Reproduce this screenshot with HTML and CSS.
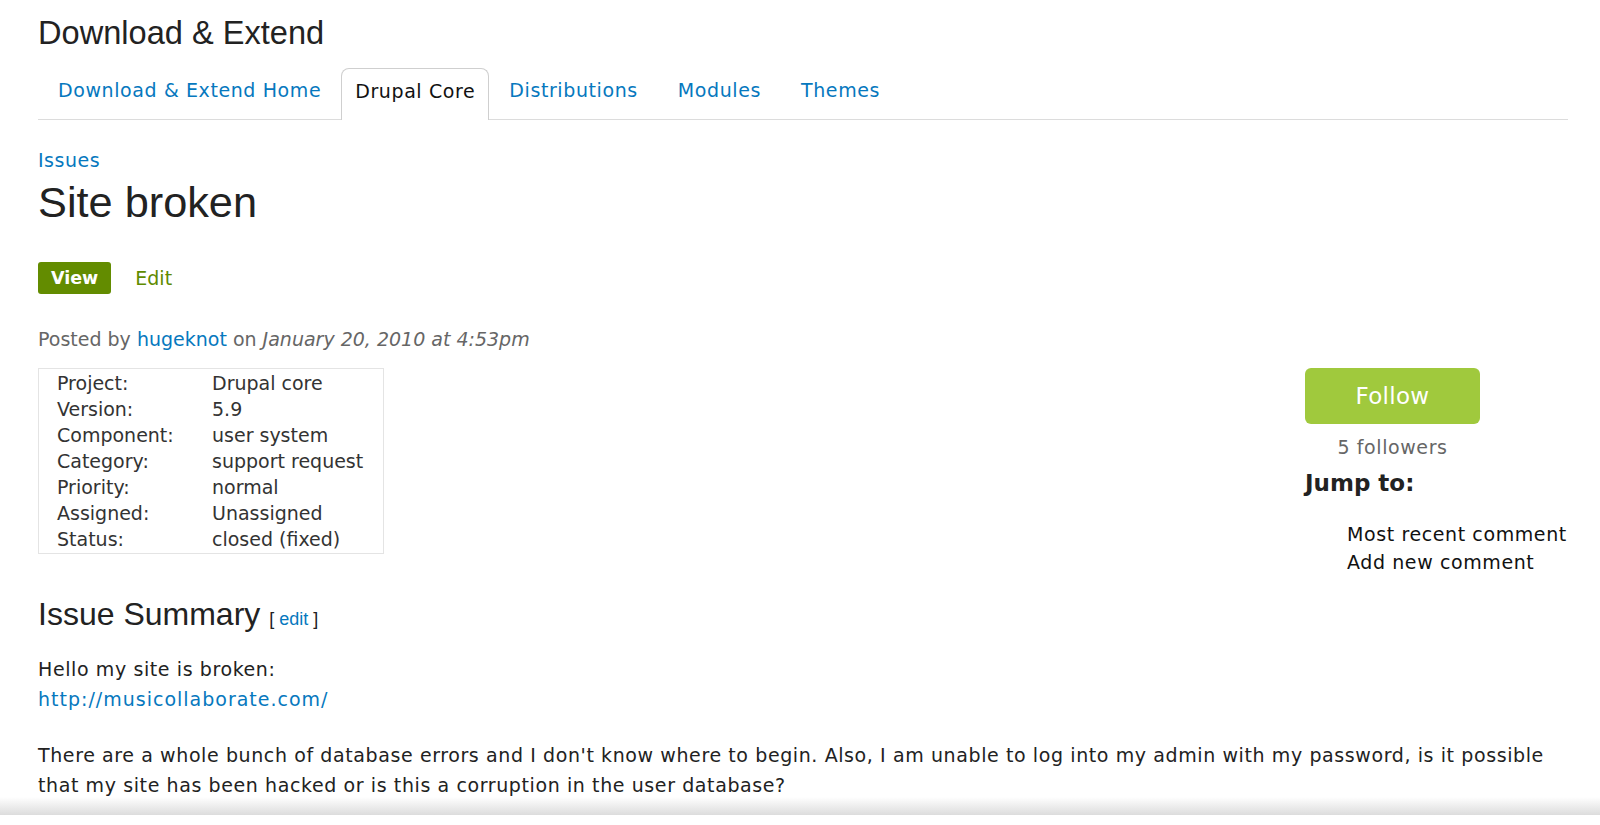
FILE: index.html
```html
<!DOCTYPE html>
<html lang="en">
<head>
<meta charset="utf-8">
<title>Site broken | Drupal.org</title>
<link rel="stylesheet" href="styles.css">
</head>
<body>
<div class="page">
  <header class="section-header">
    <h1 class="section-title">Download &amp; Extend</h1>
    <nav class="tabs">
      <ul class="tab-list">
        <li class="tab"><a href="#">Download &amp; Extend Home</a></li>
        <li class="tab active"><a href="#">Drupal Core</a></li>
        <li class="tab"><a href="#">Distributions</a></li>
        <li class="tab"><a href="#">Modules</a></li>
        <li class="tab"><a href="#">Themes</a></li>
      </ul>
    </nav>
  </header>

  <main class="content">
    <a class="breadcrumb" href="#">Issues</a>
    <h2 class="page-title">Site broken</h2>
    <ul class="local-tabs">
      <li><a class="local-tab current" href="#">View</a></li>
      <li><a class="local-tab" href="#">Edit</a></li>
    </ul>
    <p class="submitted">Posted by <a href="#">hugeknot</a> on <em>January 20, 2010 at 4:53pm</em></p>

    <div class="node-layout">
      <div class="meta">
        <table class="project-info">
          <tr><td class="label">Project:</td><td>Drupal core</td></tr>
          <tr><td class="label">Version:</td><td>5.9</td></tr>
          <tr><td class="label">Component:</td><td>user system</td></tr>
          <tr><td class="label">Category:</td><td>support request</td></tr>
          <tr><td class="label">Priority:</td><td>normal</td></tr>
          <tr><td class="label">Assigned:</td><td>Unassigned</td></tr>
          <tr><td class="label">Status:</td><td>closed (fixed)</td></tr>
        </table>
      </div>
      <aside class="sidebar">
        <a class="follow-btn" href="#">Follow</a>
        <div class="followers">5 followers</div>
        <h3 class="jump-title">Jump to:</h3>
        <ul class="jump-list">
          <li><a href="#">Most recent comment</a></li>
          <li><a href="#">Add new comment</a></li>
        </ul>
      </aside>
    </div>

    <h2 class="summary-title">Issue Summary <span class="edit-link">[ <a href="#">edit</a> ]</span></h2>
    <p class="body-text first">Hello my site is broken:<br><a class="url" href="#">http://musicollaborate.com/</a></p>
    <p class="body-text">There are a whole bunch of database errors and I don't know where to begin. Also, I am unable to log into my admin with my password, is it possible that my site has been hacked or is this a corruption in the user database?</p>
  </main>
</div>
<div class="bottom-shade"></div>
</body>
</html>
```
FILE: styles.css
```css
html, body {
  margin: 0;
  padding: 0;
  background: #fff;
}
body {
  font-family: "DejaVu Sans", "Liberation Sans", sans-serif;
  font-size: 19px;
  color: #222;
  height: 825px;
  overflow: hidden;
  display: flex;
  flex-direction: column;
}
a {
  color: #0678be;
  text-decoration: none;
}
.page {
  flex: 1;
  min-height: 0;
  overflow: hidden;
  padding: 0 32px 0 38px;
}
.section-title {
  font-family: "Liberation Sans", Arial, sans-serif;
  font-weight: normal;
  font-size: 32.6px;
  line-height: 36px;
  margin: 15px 0 0 0;
  color: #222;
}
.tabs {
  border-bottom: 1px solid #dcdcdc;
  margin-top: 17px;
}
.tab-list {
  list-style: none;
  margin: 0;
  padding: 0;
  display: flex;
}
.tab a {
  display: block;
  padding: 0 20px;
  height: 51px;
  line-height: 44px;
  font-size: 19px;
  letter-spacing: 0.6px;
}
.tab.active a {
  color: #111;
  padding: 0 13px;
  border: 1px solid #cfcfcf;
  border-bottom: none;
  border-radius: 8px 8px 0 0;
  background: #fff;
  margin-bottom: -1px;
  position: relative;
}
.content {
  padding-top: 29px;
}
.breadcrumb {
  display: block;
  font-size: 19px;
  letter-spacing: 0.5px;
  line-height: 22px;
}
.page-title {
  font-family: "Liberation Sans", Arial, sans-serif;
  font-weight: normal;
  font-size: 43.3px;
  line-height: 48px;
  margin: 7px 0 0 0;
  color: #222;
}
.local-tabs {
  list-style: none;
  margin: 36px 0 0 0;
  padding: 0;
  display: flex;
  gap: 11px;
}
.local-tab {
  display: block;
  padding: 0 13px;
  height: 32px;
  line-height: 32px;
  font-size: 19px;
  color: #5f8b00;
  border-radius: 3px;
}
.local-tab.current {
  background: #638c00;
  color: #fff;
  font-weight: bold;
  font-size: 17.5px;
}
.submitted {
  color: #666;
  margin: 33px 0 0 0;
  line-height: 24px;
}
.submitted em {
  font-style: italic;
}
.node-layout {
  display: flex;
  justify-content: space-between;
  margin-top: 17px;
}
.project-info {
  border: 1px solid #e4e4e4;
  border-collapse: separate;
  border-spacing: 0;
  padding: 1px 20px 1px 18px;
  color: #333;
  font-size: 19px;
}
.project-info td {
  padding: 0;
  height: 26px;
  line-height: 26px;
  white-space: nowrap;
}
.project-info td.label {
  width: 155px;
}
.sidebar {
  width: 263px;
}
.follow-btn {
  display: block;
  width: 175px;
  height: 56px;
  line-height: 56px;
  text-align: center;
  color: #fff;
  background: #a0c93d;
  border-radius: 6px;
  font-size: 23px;
  letter-spacing: 0.3px;
}
.followers {
  width: 175px;
  text-align: center;
  color: #666;
  margin-top: 11px;
  line-height: 24px;
  letter-spacing: 0.6px;
}
.jump-title {
  font-size: 23px;
  font-weight: bold;
  margin: 11px 0 0 0;
  line-height: 26px;
}
.jump-list {
  list-style: none;
  margin: 24px 0 0 0;
  padding: 0 0 0 42px;
}
.jump-list li {
  line-height: 28px;
  letter-spacing: 0.6px;
}
.jump-list a {
  color: #111;
}
.summary-title {
  font-family: "Liberation Sans", Arial, sans-serif;
  font-weight: normal;
  font-size: 32px;
  line-height: 36px;
  margin: 20px 0 0 0;
}
.edit-link {
  font-size: 18px;
}
.body-text {
  margin: 27px 0 0 0;
  line-height: 29.5px;
  letter-spacing: 0.6px;
}
.body-text.first {
  margin-top: 18px;
}
.body-text .url {
  letter-spacing: 1px;
}
.bottom-shade {
  height: 28px;
  flex: none;
  background: linear-gradient(to bottom, #fff 0, #dcdcdc 18px, #fff 18px);
}
```
